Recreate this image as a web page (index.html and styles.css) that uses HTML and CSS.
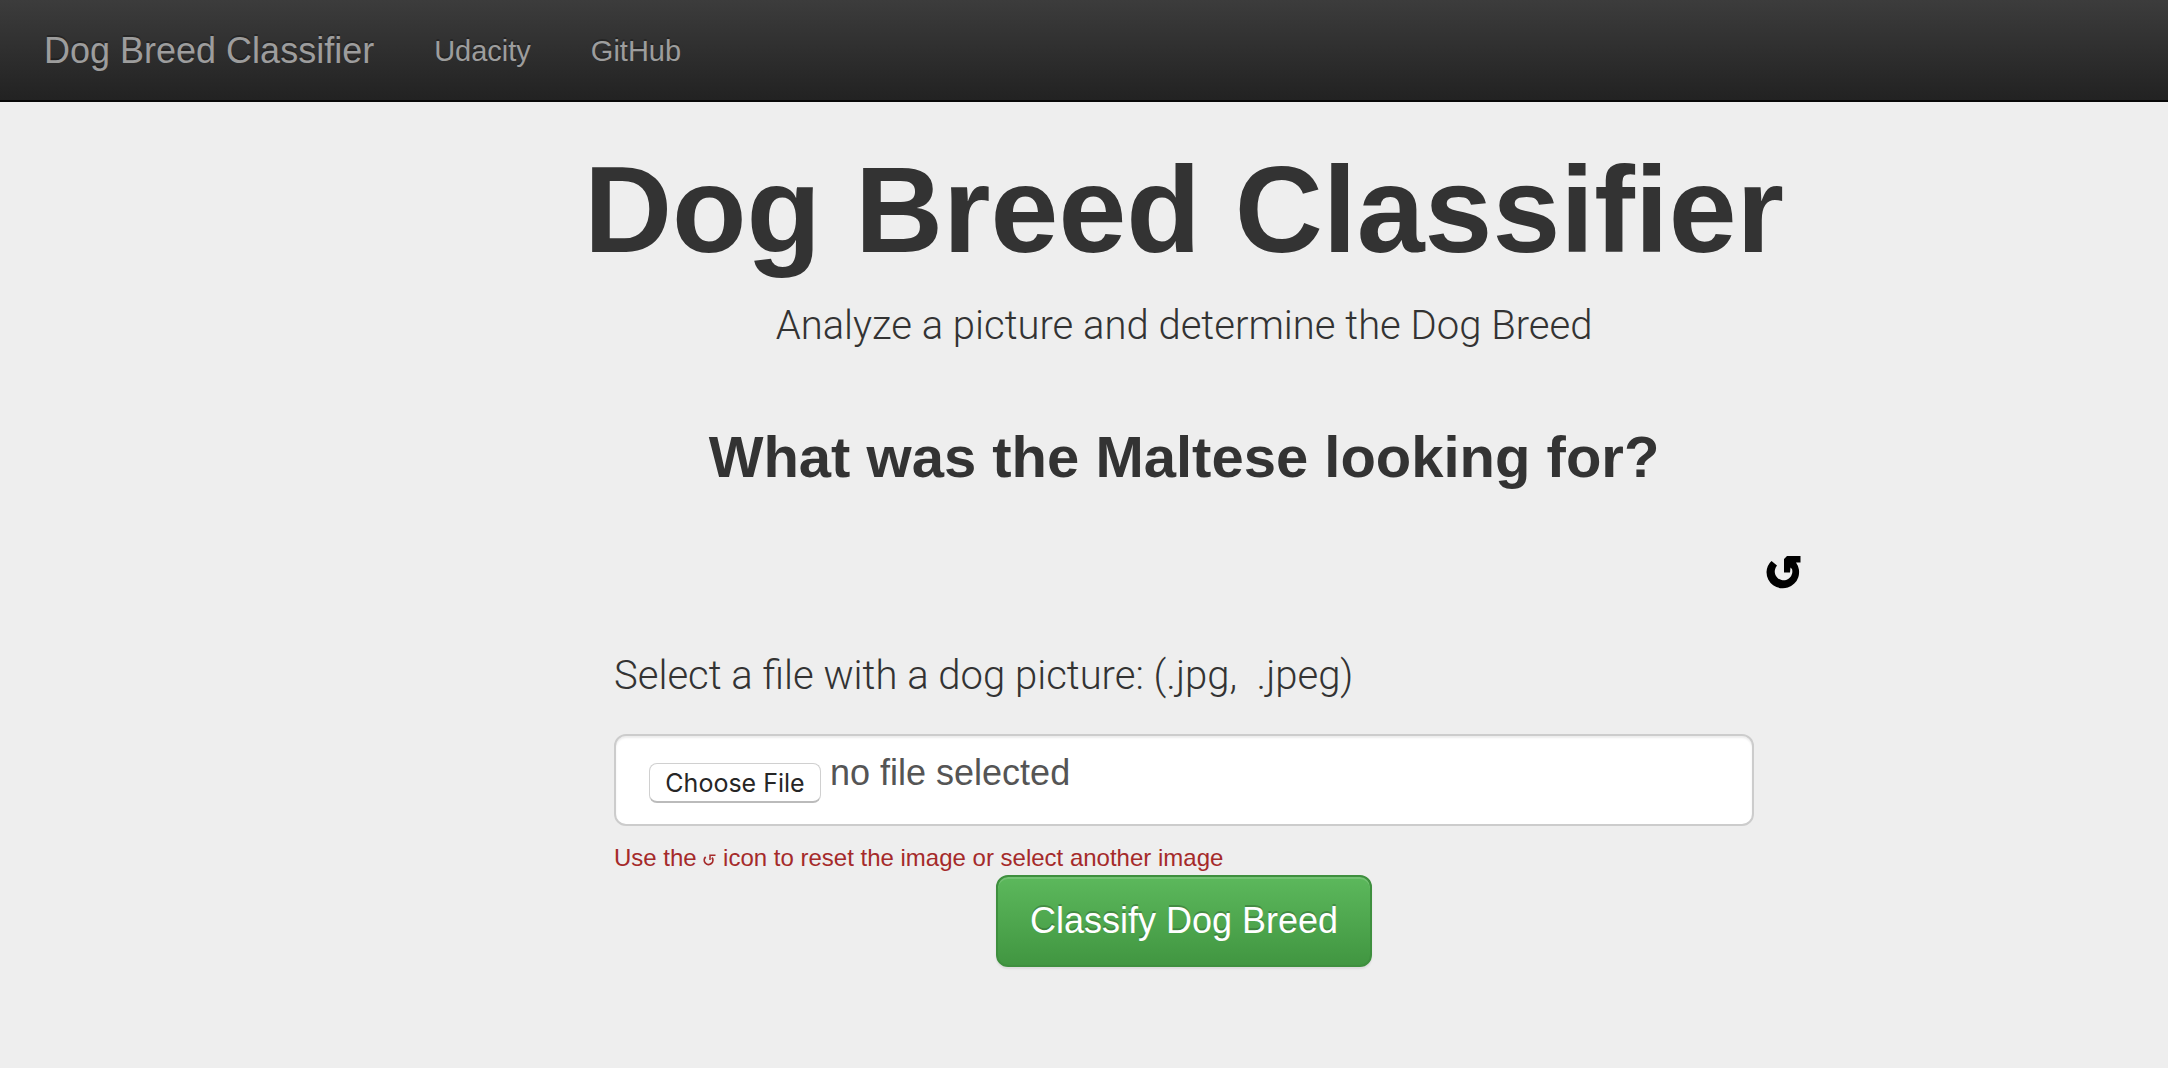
FILE: index.html
```html
<!DOCTYPE html>
<html lang="en">
<head>
<meta charset="utf-8">
<meta name="viewport" content="width=device-width, initial-scale=1">
<title>Dog Breed Classifier</title>
<link rel="stylesheet" href="styles.css">
</head>
<body>
<svg class="sprite" aria-hidden="true">
  <symbol id="reset-arrow" viewBox="0 0 36 34">
    <path d="M5.5 5 L11 9.600 A8.800 8.800 0 1 0 26 13 L24.500 11.500 L24 16.500 L18 16.500 L18 3 L21 0 L34.500 0 L34.500 6.500 L30 6.500 A16.300 16.300 0 1 1 .5 16 Q1 9 5.500 5 Z"/>
  </symbol>
  <symbol id="reset-arrow-thin" viewBox="0 0 13 12">
    <path d="M2.700 3 A4.300 4.300 0 1 0 9 3.600" fill="none" stroke="currentColor" stroke-width="1.800"/>
    <path d="M7 6 V1.200 H12.500" fill="none" stroke="currentColor" stroke-width="1.500"/>
  </symbol>
</svg>

<nav class="navbar">
  <a class="navbar-brand" href="#">Dog Breed Classifier</a>
  <a class="navbar-link" href="#">Udacity</a>
  <a class="navbar-link" href="#">GitHub</a>
</nav>

<main class="page">
  <div class="container">
    <header class="intro">
      <h1 class="title">Dog Breed Classifier</h1>
      <p class="lead">Analyze a picture and determine the Dog Breed</p>
      <h2 class="joke">What was the Maltese looking for?</h2>
    </header>

    <form class="classifier">
      <div class="reset-row">
        <button class="reset" type="reset" aria-label="Reset the image">
          <svg class="reset-icon" aria-hidden="true"><use href="#reset-arrow"/></svg>
        </button>
      </div>
      <div class="field">
        <label class="lead" for="picture">Select a file with a dog picture: (.jpg, &nbsp;.jpeg)</label>
        <div class="file-box">
          <input class="file-input" id="picture" type="file" accept=".jpg,.jpeg">
          <span class="file-name">no file selected</span>
        </div>
        <p class="hint">Use the <svg class="hint-icon" role="img" aria-label="reset"><use href="#reset-arrow-thin"/></svg> icon to reset the image or select another image</p>
      </div>
      <button class="submit" type="submit">Classify Dog Breed</button>
    </form>
  </div>
</main>
</body>
</html>
```
FILE: styles.css
```css
* {
  box-sizing: border-box;
}

body {
  margin: 0;
  background: #eee;
  color: #333;
  font-family: "Liberation Sans", Arial, sans-serif;
}

.sprite {
  display: none;
}

/* Navigation */
.navbar {
  display: flex;
  align-items: center;
  gap: 60px;
  min-height: 102px;
  padding: 2px 44px 0;
  border-bottom: 2px solid #080808;
  background: linear-gradient(#3c3c3c, #222);
}

.navbar a {
  color: #9d9d9d;
  line-height: 40px;
  text-decoration: none;
  text-shadow: 0 -2px 0 rgba(0, 0, 0, .25);
}

.navbar-brand {
  font-size: 36px;
}

.navbar .navbar-link {
  font-size: 29px;
}

/* Content */
.page {
  padding: 40px 0 40px 200px;
}

.container {
  max-width: 1240px;
  margin: 0 auto;
}

.intro {
  text-align: center;
}

.title {
  margin: 0;
  font-size: 122px;
  line-height: 136px;
}

.lead {
  margin: 18px 0;
  font-family: Roboto, sans-serif;
  font-size: 40px;
  font-weight: 300;
  line-height: 60px;
}

.joke {
  margin: 68px 0 0;
  font-size: 58px;
  line-height: 66px;
}

/* Form */
.classifier {
  display: flex;
  flex-direction: column;
}

.reset-row {
  display: flex;
  justify-content: flex-end;
  padding: 66px 2px 56px;
}

.reset {
  display: flex;
  padding: 0;
  border: 0;
  background: none;
  cursor: pointer;
}

.reset-icon {
  width: 36px;
  height: 34px;
}

.field {
  padding: 0 50px;
}

.field .lead {
  display: block;
  margin: 0 0 28px;
}

.file-box {
  display: flex;
  align-items: flex-end;
  gap: 9px;
  min-height: 92px;
  padding: 0 33px 21px;
  border: 2px solid #ccc;
  border-radius: 12px;
  background: #fff;
  box-shadow: inset 0 2px 2px rgba(0, 0, 0, .075);
}

.file-input {
  width: 172px;
  height: 40px;
  overflow: hidden;
  color: transparent;
  font-family: Inter, sans-serif;
  font-size: 25px;
}

.file-input::file-selector-button {
  width: 172px;
  height: 40px;
  margin: 0;
  padding: 0;
  border: 1px solid #d0d0d0;
  border-bottom: 2px solid #bbb;
  border-radius: 8px;
  background: #fff;
  color: #262626;
  font: inherit;
}

.file-name {
  padding-bottom: 10px;
  color: #555;
  font-size: 36px;
  line-height: 40px;
}

.hint {
  margin: 15px 0 0;
  color: #a52a2a;
  font-size: 24px;
  line-height: 34px;
}

.hint-icon {
  width: 13px;
  height: 12px;
}

.submit {
  align-self: center;
  padding: 0 32px;
  border: 2px solid #3e8f3e;
  border-radius: 12px;
  background: linear-gradient(#5cb85c, #419641);
  box-shadow: inset 0 2px 0 rgba(255, 255, 255, .15), 0 2px 2px rgba(0, 0, 0, .075);
  color: #fff;
  font-family: inherit;
  font-size: 36px;
  line-height: 88px;
  text-shadow: 0 -2px 0 rgba(0, 0, 0, .2);
  cursor: pointer;
}
```
